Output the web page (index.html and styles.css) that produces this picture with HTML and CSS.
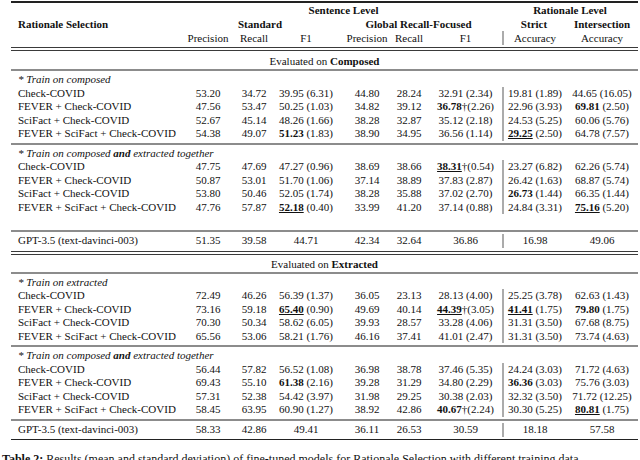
FILE: index.html
```html
<!DOCTYPE html>
<html>
<head>
<meta charset="utf-8">
<link rel="stylesheet" href="styles.css">
</head>
<body>
<div class="tbl">
  <div class="toprule"></div>
  <div class="row h">
    <div class="c hb sent">Sentence Level</div>
    <div class="c hb ratl">Rationale Level</div>
  </div>
  <div class="row h">
    <div class="l hb">Rationale Selection</div>
    <div class="c hb std">Standard</div>
    <div class="c hb glob">Global Recall-Focused</div>
    <div class="c hb">Strict</div>
    <div class="c hb">Intersection</div>
  </div>
  <div class="row h">
    <div class="l"></div>
    <div class="c">Precision</div>
    <div class="c">Recall</div>
    <div class="c">F1</div>
    <div class="c p2">Precision</div>
    <div class="c">Recall</div>
    <div class="c">F1</div>
    <div class="c v">Accuracy</div>
    <div class="c">Accuracy</div>
  </div>
  <div class="dbl"></div>
  <div class="eval">Evaluated on <b>Composed</b></div>
  <div class="mid"></div>

  <div class="blk">
    <div class="row"><div class="l train">* Train on composed</div></div>
    <div class="row"><div class="l">Check-COVID</div><div class="c">53.20</div><div class="c">34.72</div><div class="c">39.95 (6.31)</div><div class="c p2">44.80</div><div class="c">28.24</div><div class="c">32.91 (2.34)</div><div class="c v">19.81 (1.89)</div><div class="c">44.65 (16.05)</div></div>
    <div class="row"><div class="l">FEVER + Check-COVID</div><div class="c">47.56</div><div class="c">53.47</div><div class="c">50.25 (1.03)</div><div class="c p2">34.82</div><div class="c">39.12</div><div class="c"><b>36.78</b>†(2.26)</div><div class="c v">22.96 (3.93)</div><div class="c"><b>69.81</b> (2.50)</div></div>
    <div class="row"><div class="l">SciFact + Check-COVID</div><div class="c">52.67</div><div class="c">45.14</div><div class="c">48.26 (1.66)</div><div class="c p2">38.28</div><div class="c">32.87</div><div class="c">35.12 (2.18)</div><div class="c v">24.53 (5.25)</div><div class="c">60.06 (5.76)</div></div>
    <div class="row"><div class="l">FEVER + SciFact + Check-COVID</div><div class="c">54.38</div><div class="c">49.07</div><div class="c"><b>51.23</b> (1.83)</div><div class="c p2">38.90</div><div class="c">34.95</div><div class="c">36.56 (1.14)</div><div class="c v"><b class="u">29.25</b> (2.50)</div><div class="c">64.78 (7.57)</div></div>
  </div>
  <div class="mid"></div>

  <div class="blk">
    <div class="row"><div class="l train">* Train on composed <b>and</b> extracted together</div></div>
    <div class="row"><div class="l">Check-COVID</div><div class="c">47.75</div><div class="c">47.69</div><div class="c">47.27 (0.96)</div><div class="c p2">38.69</div><div class="c">38.66</div><div class="c"><b class="u">38.31</b>†(0.54)</div><div class="c v">23.27 (6.82)</div><div class="c">62.26 (5.74)</div></div>
    <div class="row"><div class="l">FEVER + Check-COVID</div><div class="c">50.87</div><div class="c">53.01</div><div class="c">51.70 (1.06)</div><div class="c p2">37.14</div><div class="c">38.89</div><div class="c">37.83 (2.87)</div><div class="c v">26.42 (1.63)</div><div class="c">68.87 (5.74)</div></div>
    <div class="row"><div class="l">SciFact + Check-COVID</div><div class="c">53.80</div><div class="c">50.46</div><div class="c">52.05 (1.74)</div><div class="c p2">38.28</div><div class="c">35.88</div><div class="c">37.02 (2.70)</div><div class="c v"><b>26.73</b> (1.44)</div><div class="c">66.35 (1.44)</div></div>
    <div class="row"><div class="l">FEVER + SciFact + Check-COVID</div><div class="c">47.76</div><div class="c">57.87</div><div class="c"><b class="u">52.18</b> (0.40)</div><div class="c p2">33.99</div><div class="c">41.20</div><div class="c">37.14 (0.88)</div><div class="c v">24.84 (3.31)</div><div class="c"><b class="u">75.16</b> (5.20)</div></div>
    <div class="row"></div>
  </div>
  <div class="mid"></div>

  <div class="gpt">
    <div class="row"><div class="l">GPT-3.5 (text-davinci-003)</div><div class="c">51.35</div><div class="c">39.58</div><div class="c">44.71</div><div class="c p2">42.34</div><div class="c">32.64</div><div class="c">36.86</div><div class="c v">16.98</div><div class="c">49.06</div></div>
  </div>
  <div class="dbl"></div>
  <div class="eval eval2">Evaluated on <b>Extracted</b></div>
  <div class="mid"></div>

  <div class="blk">
    <div class="row"><div class="l train">* Train on extracted</div></div>
    <div class="row"><div class="l">Check-COVID</div><div class="c">72.49</div><div class="c">46.26</div><div class="c">56.39 (1.37)</div><div class="c p2">36.05</div><div class="c">23.13</div><div class="c">28.13 (4.00)</div><div class="c v">25.25 (3.78)</div><div class="c">62.63 (1.43)</div></div>
    <div class="row"><div class="l">FEVER + Check-COVID</div><div class="c">73.16</div><div class="c">59.18</div><div class="c"><b class="u">65.40</b> (0.90)</div><div class="c p2">49.69</div><div class="c">40.14</div><div class="c"><b class="u">44.39</b>†(3.05)</div><div class="c v"><b class="u">41.41</b> (1.75)</div><div class="c"><b>79.80</b> (1.75)</div></div>
    <div class="row"><div class="l">SciFact + Check-COVID</div><div class="c">70.30</div><div class="c">50.34</div><div class="c">58.62 (6.05)</div><div class="c p2">39.93</div><div class="c">28.57</div><div class="c">33.28 (4.06)</div><div class="c v">31.31 (3.50)</div><div class="c">67.68 (8.75)</div></div>
    <div class="row"><div class="l">FEVER + SciFact + Check-COVID</div><div class="c">65.56</div><div class="c">53.06</div><div class="c">58.21 (1.76)</div><div class="c p2">46.16</div><div class="c">37.41</div><div class="c">41.01 (2.47)</div><div class="c v">31.31 (3.50)</div><div class="c">73.74 (4.63)</div></div>
  </div>
  <div class="mid"></div>

  <div class="blk">
    <div class="row"><div class="l train">* Train on composed <b>and</b> extracted together</div></div>
    <div class="row"><div class="l">Check-COVID</div><div class="c">56.44</div><div class="c">57.82</div><div class="c">56.52 (1.08)</div><div class="c p2">36.98</div><div class="c">38.78</div><div class="c">37.46 (5.35)</div><div class="c v">24.24 (3.03)</div><div class="c">71.72 (4.63)</div></div>
    <div class="row"><div class="l">FEVER + Check-COVID</div><div class="c">69.43</div><div class="c">55.10</div><div class="c"><b>61.38</b> (2.16)</div><div class="c p2">39.28</div><div class="c">31.29</div><div class="c">34.80 (2.29)</div><div class="c v"><b>36.36</b> (3.03)</div><div class="c">75.76 (3.03)</div></div>
    <div class="row"><div class="l">SciFact + Check-COVID</div><div class="c">57.31</div><div class="c">52.38</div><div class="c">54.42 (3.97)</div><div class="c p2">31.98</div><div class="c">29.25</div><div class="c">30.38 (2.03)</div><div class="c v">32.32 (3.50)</div><div class="c">71.72 (12.25)</div></div>
    <div class="row"><div class="l">FEVER + SciFact + Check-COVID</div><div class="c">58.45</div><div class="c">63.95</div><div class="c">60.90 (1.27)</div><div class="c p2">38.92</div><div class="c">42.86</div><div class="c"><b>40.67</b>†(2.24)</div><div class="c v">30.30 (5.25)</div><div class="c"><b class="u">80.81</b> (1.75)</div></div>
  </div>
  <div class="mid"></div>

  <div class="gpt">
    <div class="row"><div class="l">GPT-3.5 (text-davinci-003)</div><div class="c">58.33</div><div class="c">42.86</div><div class="c">49.41</div><div class="c p2">36.11</div><div class="c">26.53</div><div class="c">30.59</div><div class="c v">18.18</div><div class="c">57.58</div></div>
  </div>
  <div class="botrule"></div>
</div>
<p class="caption"><b>Table 2:</b> Results (mean and standard deviation) of fine-tuned models for Rationale Selection with different training data.</p>
</body>
</html>
```
FILE: styles.css
```css
* {
  box-sizing: border-box;
  margin: 0;
  padding: 0;
}

body {
  margin: 0;
  background: #ffffff;
  font-family: "Liberation Serif", "Times New Roman", serif;
  font-size: 11px;
  color: #111111;
  width: 640px;
  height: 460px;
  overflow: hidden;
}

.tbl {
  margin-left: 11px;
  width: 627px;
  padding-top: 1px;
}

.toprule,
.botrule {
  height: 1.5px;
  background: #222222;
}

.row {
  display: grid;
  grid-template-columns: 174px 46px 46px 58px 54px 40px 73px 64px 72px;
  height: 13.5px;
  line-height: 13.5px;
}

.row.h {
  height: 14px;
  line-height: 14px;
}

.c {
  text-align: center;
  white-space: nowrap;
}

.l {
  text-align: left;
  white-space: nowrap;
  padding-left: 7px;
}

.hb {
  font-weight: bold;
}

.p2 {
  padding-left: 10px;
}

.v {
  border-left: 2px solid #ababab;
}

.sent {
  grid-column: 2 / 8;
}

.ratl {
  grid-column: 8 / 10;
}

.std {
  grid-column: 2 / 5;
}

.glob {
  grid-column: 5 / 8;
}

.train {
  grid-column: 1 / 10;
  font-style: italic;
}

.u {
  text-decoration: underline;
  text-underline-offset: 1px;
}

.dbl {
  margin-top: 2.5px;
  height: 4px;
  border-top: 1px solid #3a3a3a;
  border-bottom: 1px solid #3a3a3a;
}

.eval {
  height: 18px;
  padding-top: 3px;
  line-height: 14px;
  text-align: center;
}

.eval2 {
  height: 17px;
  padding-top: 2px;
}

.mid {
  height: 2px;
  background: #8c8c8c;
}

.blk {
  padding: 2px 0;
}

.gpt {
  padding: 2.5px 0 2px;
}

.gpt + .dbl {
  margin-top: 1px;
}

.caption {
  width: 640px;
  margin-top: 12px;
  padding-left: 2px;
  font-size: 12px;
  line-height: 14px;
}
```
